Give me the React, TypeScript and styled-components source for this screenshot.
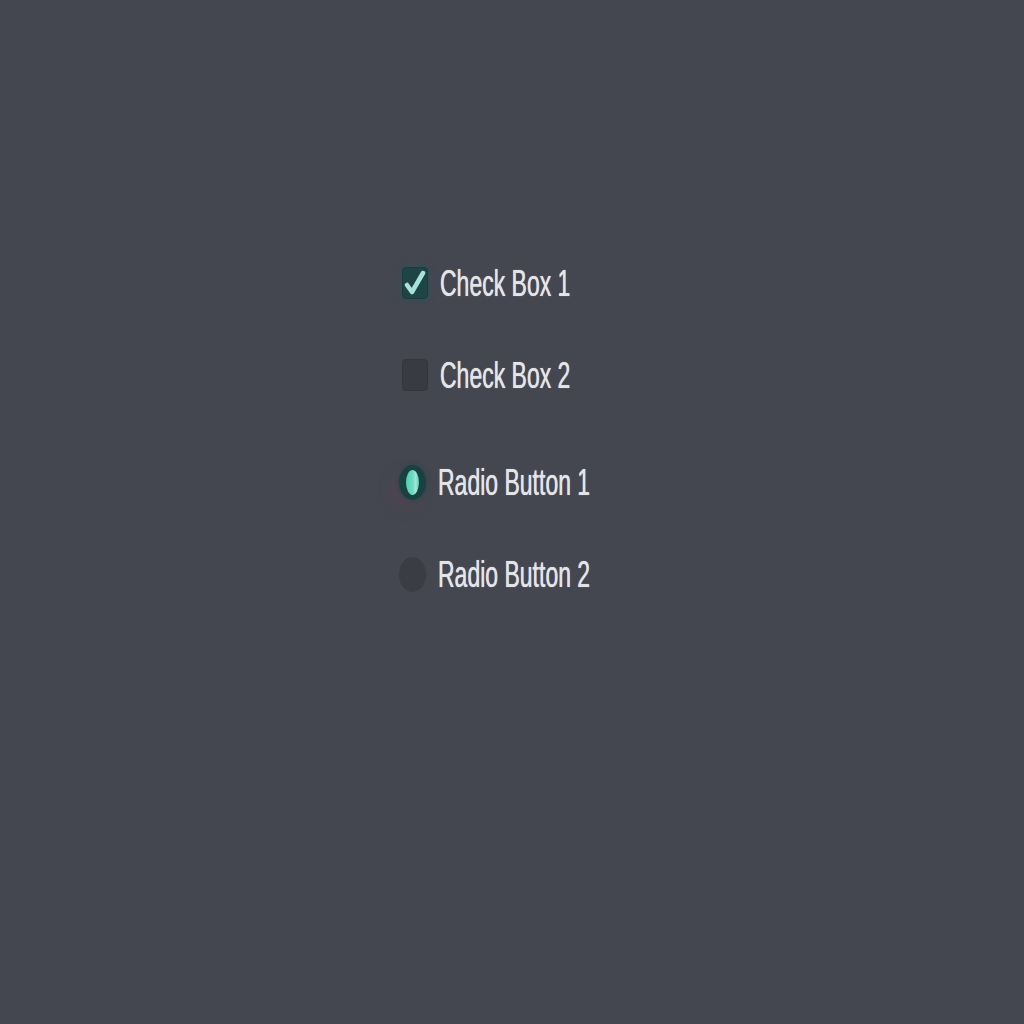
import React from "react";
import styled, { createGlobalStyle } from "styled-components";

const Global = createGlobalStyle`
  html, body { margin: 0; padding: 0; background: #444750; }
  body { font-family: "Liberation Sans", Arial, sans-serif; }
`;

const Page = styled.div`
  min-height: 1024px;
  box-sizing: border-box;
  padding: 263px 0 0 399px;
  display: flex;
  flex-direction: column;
  gap: 67px;
`;

const Group = styled.div`
  display: flex;
  flex-direction: column;
  gap: 52px;
`;

const Row = styled.label`
  height: 40px;
  display: flex;
  align-items: center;
  gap: 12px;
  cursor: pointer;
`;

const Box = styled.span<{ $checked?: boolean }>`
  width: 26px;
  height: 32px;
  box-sizing: border-box;
  border-radius: 4px;
  display: flex;
  align-items: center;
  justify-content: center;
  margin-left: 3px;
  background: ${(p) => (p.$checked ? "#1f4446" : "#393b43")};
  border: 1px solid ${(p) => (p.$checked ? "#1b3a3d" : "#34363d")};
  box-shadow: ${(p) => (p.$checked ? "0 0 6px rgba(30,90,95,0.6)" : "none")};
`;

const Radio = styled.span<{ $checked?: boolean }>`
  width: 27px;
  height: 35px;
  box-sizing: border-box;
  border-radius: 50%;
  display: flex;
  align-items: center;
  justify-content: center;
  background: ${(p) => (p.$checked ? "#1a4142" : "#3b3d45")};
  box-shadow: ${(p) =>
    p.$checked
      ? "0 0 4px rgba(20,70,70,0.6), -6px 8px 16px rgba(130,60,90,0.22)"
      : "none"};
`;

const Dot = styled.span`
  width: 13px;
  height: 25px;
  border-radius: 50%;
  background: linear-gradient(90deg, #58cbb1 0%, #6fdcc4 55%, #a6e8da 75%, #58c6ae 100%);
`;

const Label = styled.span`
  display: inline-block;
  font-size: 23px;
  color: #e4e5e8;
  text-shadow: 0 0 0.6px #e4e5e8;
  transform: scaleY(1.62);
  transform-origin: left center;
  white-space: nowrap;
`;

const Check = () => (
  <svg width="22" height="28" viewBox="0 0 22 28">
    <path
      d="M3 16 L8 23 L19 4"
      fill="none"
      stroke="#a8e2da"
      strokeWidth="4.5"
      strokeLinecap="round"
      strokeLinejoin="round"
    />
  </svg>
);

export default function App() {
  return (
    <>
      <Global />
      <Page>
        <Group>
          <Row>
            <Box $checked>
              <Check />
            </Box>
            <Label>Check Box 1</Label>
          </Row>
          <Row>
            <Box />
            <Label>Check Box 2</Label>
          </Row>
        </Group>
        <Group>
          <Row>
            <Radio $checked>
              <Dot />
            </Radio>
            <Label>Radio Button 1</Label>
          </Row>
          <Row>
            <Radio />
            <Label>Radio Button 2</Label>
          </Row>
        </Group>
      </Page>
    </>
  );
}
